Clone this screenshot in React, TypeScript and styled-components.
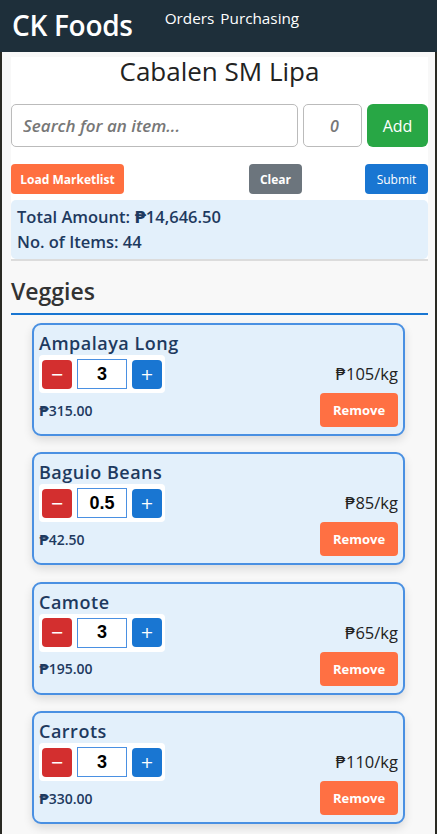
import React from "react";
import styled, { createGlobalStyle } from "styled-components";

const Global = createGlobalStyle`
  html, body { margin: 0; padding: 0; background: #2a2a24; }
  * { box-sizing: border-box; }
`;

const Shell = styled.div`
  min-height: 834px;
  background: #f8f8f8;
  border-left: 2px solid #2a2a24;
  border-right: 2px solid #2a2a24;
  font-family: "Open Sans", "DejaVu Sans", sans-serif;
`;

const Header = styled.header`
  height: 52px;
  margin: 0 -2px;
  background: #1e2f3a;
  display: flex;
  align-items: flex-start;
  padding: 0 0 0 12px;
`;

const Brand = styled.div`
  color: #fff;
  font-family: "Open Sans", sans-serif;
  font-size: 28px;
  font-weight: 600;
  line-height: 50px;
  letter-spacing: -0.3px;
`;

const Nav = styled.nav`
  display: flex;
  gap: 6px;
  margin-left: 32px;
  margin-top: 7px;
`;

const NavLink = styled.a`
  color: #fff;
  font-family: "Open Sans", sans-serif;
  font-size: 15.3px;
  line-height: 22px;
`;

const Content = styled.main`
  padding: 5px 7px 0 9px;
`;

const Panel = styled.section`
  background: #fff;
  border-bottom: 2px solid #dcdcdc;
`;

const Title = styled.h1`
  margin: 0;
  text-align: center;
  font-size: 26px;
  font-weight: 400;
  color: #222;
  line-height: 28px;
  height: 47px;
`;

const SearchRow = styled.div`
  display: flex;
  gap: 5px;
  height: 43px;
`;

const SearchInput = styled.input`
  flex: 1;
  min-width: 0;
  height: 43px;
  border: 1px solid #bbb;
  border-radius: 5px;
  padding: 0 11px;
  font-family: "Open Sans", sans-serif;
  font-size: 17px;
  font-weight: 600;
  font-style: italic;
  &::placeholder { color: #777; }
`;

const QtyInput = styled.input`
  width: 59px;
  height: 43px;
  border: 1px solid #bbb;
  border-radius: 5px;
  text-align: center;
  padding: 0 0 0 4px;
  font-family: "Open Sans", sans-serif;
  font-size: 16px;
  font-weight: 600;
  font-style: italic;
  &::placeholder { color: #777; }
`;

const Btn = styled.button<{ $bg: string; $w?: number; $h?: number; $fs?: number; $fw?: number }>`
  background: ${(p) => p.$bg};
  color: #fff;
  border: none;
  border-radius: ${(p) => ((p.$h ?? 30) > 40 ? 6 : 4)}px;
  width: ${(p) => (p.$w ? `${p.$w}px` : "auto")};
  height: ${(p) => p.$h ?? 30}px;
  padding: 0;
  font-family: "Open Sans", sans-serif;
  font-size: ${(p) => p.$fs ?? 12}px;
  font-weight: ${(p) => p.$fw ?? 700};
  display: flex;
  align-items: center;
  justify-content: center;
  cursor: pointer;
  flex-shrink: 0;
`;

const ActionRow = styled.div`
  display: flex;
  align-items: center;
  margin-top: 17px;
`;

const ClearSlot = styled.div`
  margin-left: auto;
  margin-right: 63px;
`;

const Summary = styled.div`
  margin-top: 6px;
  background: #e3f0fb;
  border-radius: 5px;
  padding: 4px 6px 5px;
  color: #1e3a5f;
  font-size: 16.5px;
  font-weight: 600;
  line-height: 25px;
`;

const SectionTitle = styled.h2`
  margin: 0;
  padding-top: 15px;
  font-size: 23px;
  font-weight: 600;
  color: #333;
  line-height: 30px;
  padding-bottom: 7px;
  border-bottom: 2px solid #1976d2;
`;

const List = styled.div`
  display: flex;
  flex-direction: column;
  gap: 16.4px;
  padding: 8px 23px 20px 21px;
`;

const Card = styled.div`
  background: #e3f0fb;
  border: 2px solid #4a90e2;
  border-radius: 9px;
  box-shadow: 0 4px 10px rgba(0, 0, 0, 0.12);
  padding: 7px 5px 6px 5px;
  height: 113px;
`;

const ItemName = styled.div`
  font-size: 18px;
  letter-spacing: 0.5px;
  font-weight: 600;
  color: #1e3a5f;
  line-height: 22px;
  margin-bottom: 1px;
`;

const Row = styled.div`
  display: flex;
  justify-content: space-between;
  align-items: center;
`;

const Stepper = styled.div`
  display: flex;
  align-items: center;
  gap: 5px;
  background: #fff;
  border-radius: 4px;
  padding: 4px 3px;
`;

const StepBtn = styled.button<{ $bg: string }>`
  width: 30px;
  height: 29px;
  border: none;
  border-radius: 4px;
  background: ${(p) => p.$bg};
  color: #fff;
  font-family: "DejaVu Sans", sans-serif;
  font-size: 16px;
  padding: 0;
  display: flex;
  align-items: center;
  justify-content: center;
`;

const StepValue = styled.input`
  width: 50px;
  height: 30px;
  border: 1px solid #4a90e2;
  background: #fff;
  text-align: center;
  font-family: "Liberation Sans", Arial, sans-serif;
  font-size: 18px;
  font-weight: 700;
  color: #000;
  padding: 0;
`;

const UnitPrice = styled.div`
  font-size: 16.5px;
  color: #222;
  line-height: 22px;
`;

const LineTotal = styled.div`
  font-size: 14px;
  font-weight: 600;
  color: #1e3a5f;
`;

type Item = { name: string; qty: string; price: number; total: string };

const items: Item[] = [
  { name: "Ampalaya Long", qty: "3", price: 105, total: "₱315.00" },
  { name: "Baguio Beans", qty: "0.5", price: 85, total: "₱42.50" },
  { name: "Camote", qty: "3", price: 65, total: "₱195.00" },
  { name: "Carrots", qty: "3", price: 110, total: "₱330.00" },
];

export default function App() {
  return (
    <>
      <Global />
      <Shell>
        <Header>
          <Brand>CK Foods</Brand>
          <Nav>
            <NavLink>Orders</NavLink>
            <NavLink>Purchasing</NavLink>
          </Nav>
        </Header>
        <Content>
          <Panel>
            <Title>Cabalen SM Lipa</Title>
            <SearchRow>
              <SearchInput placeholder="Search for an item..." />
              <QtyInput placeholder="0" />
              <Btn $bg="#28a745" $w={61} $h={43} $fs={16} $fw={500}>Add</Btn>
            </SearchRow>
            <ActionRow>
              <Btn $bg="#ff6f3f" $w={113}>Load Marketlist</Btn>
              <ClearSlot>
                <Btn $bg="#6c757d" $w={53}>Clear</Btn>
              </ClearSlot>
              <Btn $bg="#1976d2" $w={63} $fw={500}>Submit</Btn>
            </ActionRow>
            <Summary>
              <div>Total Amount: ₱14,646.50</div>
              <div>No. of Items: 44</div>
            </Summary>
          </Panel>
          <SectionTitle>Veggies</SectionTitle>
          <List>
            {items.map((it) => (
              <Card key={it.name}>
                <ItemName>{it.name}</ItemName>
                <Row>
                  <Stepper>
                    <StepBtn $bg="#d32f2f">−</StepBtn>
                    <StepValue value={it.qty} readOnly />
                    <StepBtn $bg="#1976d2">+</StepBtn>
                  </Stepper>
                  <UnitPrice>₱{it.price}/kg</UnitPrice>
                </Row>
                <Row>
                  <LineTotal>{it.total}</LineTotal>
                  <Btn $bg="#ff7043" $w={78} $h={34} $fs={13}>Remove</Btn>
                </Row>
              </Card>
            ))}
          </List>
        </Content>
      </Shell>
    </>
  );
}
